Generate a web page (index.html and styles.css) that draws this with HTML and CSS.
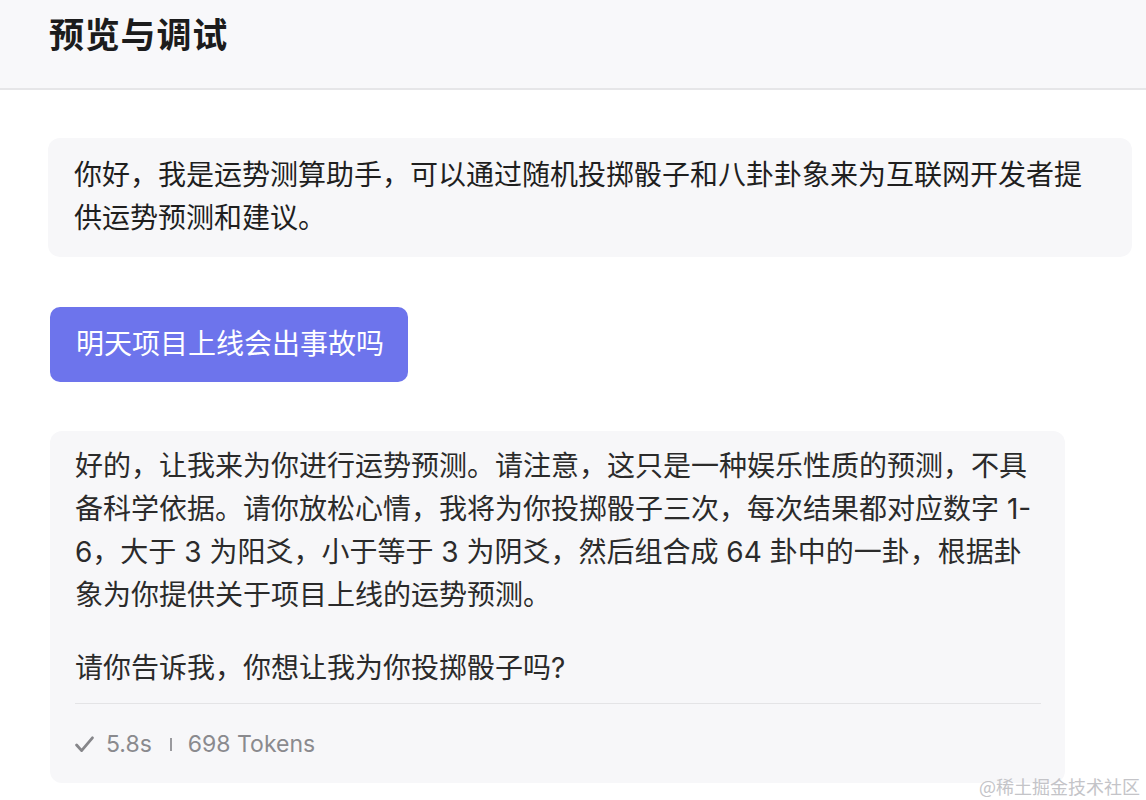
FILE: index.html
```html
<!DOCTYPE html>
<html lang="zh-CN">
<head>
<meta charset="utf-8">
<link rel="stylesheet" href="styles.css">
</head>
<body>
<header class="header">
  <h1 class="title">预览与调试</h1>
</header>
<main class="chat">
  <div class="bubble bot first">
    <p>你好，我是运势测算助手，可以通过随机投掷骰子和八卦卦象来为互联网开发者提供运势预测和建议。</p>
  </div>
  <div class="bubble user">明天项目上线会出事故吗</div>
  <div class="bubble bot answer">
    <p>好的，让我来为你进行运势预测。请注意，这只是一种娱乐性质的预测，不具备科学依据。请你放松心情，我将为你投掷骰子三次，每次结果都对应数字 1-6，大于 3 为阳爻，小于等于 3 为阴爻，然后组合成 64 卦中的一卦，根据卦象为你提供关于项目上线的运势预测。</p>
    <p>请你告诉我，你想让我为你投掷骰子吗?</p>
    <div class="meta">
      <svg class="check" width="19" height="17" viewBox="0 0 19 17"><path d="M1.6 9 L6.6 14.6 L17.4 1.8" fill="none" stroke="#86868a" stroke-width="2.8" stroke-linecap="round" stroke-linejoin="round"/></svg>
      <span class="time">5.8s</span>
      <span class="sep"></span>
      <span>698 Tokens</span>
    </div>
  </div>
</main>
<div class="watermark">@稀土掘金技术社区</div>
</body>
</html>
```
FILE: styles.css
```css
* { box-sizing: border-box; }
html, body { margin: 0; padding: 0; }
body {
  width: 1146px;
  height: 800px;
  overflow: hidden;
  background: #ffffff;
  font-family: "Inter", "Noto Sans CJK SC", sans-serif;
  color: #1f1f1f;
  position: relative;
}
.header {
  height: 90px;
  background: #f8f8fa;
  border-bottom: 2px solid #e6e6e8;
  padding: 0 0 0 49px;
  display: flex;
  align-items: flex-start;
}
.title {
  margin: 10px 0 0 0;
  font-family: "Noto Sans CJK SC", sans-serif;
  font-size: 35px;
  line-height: 46px;
  font-weight: 700;
  color: #1c1c1c;
  letter-spacing: 0.8px;
}
.chat {
  display: flex;
  flex-direction: column;
  align-items: flex-start;
  padding: 48px 0 0 48px;
}
.bubble {
  font-size: 28px;
  line-height: 43px;
  border-radius: 12px;
}
.bubble p { margin: 0; }
.bot {
  background: #f7f7f9;
}
.first {
  width: 1084px;
  padding: 16px 26px 17px 26px;
}
.user {
  margin: 50px 0 0 2px;
  background: #6d74ec;
  color: #ffffff;
  padding: 16px 24px 16px 26px;
  border-radius: 10px;
}
.answer {
  margin: 49px 0 0 2px;
  width: 1015px;
  padding: 14px 24px 24px 25px;
  color: #2b2b2b;
}
.answer p + p { margin-top: 30px; }
.meta {
  margin-top: 13px;
  border-top: 1px solid #e4e4e6;
  padding-top: 25px;
  display: flex;
  align-items: center;
  font-size: 23px;
  line-height: 30px;
  color: #8a8a8e;
  font-family: "Inter", "Noto Sans", sans-serif;
}
.check { margin-left: 0; margin-right: 12px; }
.sep {
  width: 2px;
  height: 13px;
  background: #9a9a9e;
  margin: 0 16px 0 18px;
}
.watermark {
  position: absolute;
  right: 6px;
  bottom: 2px;
  font-family: "Noto Sans CJK SC", sans-serif;
  font-size: 18px;
  line-height: 24px;
  color: #c4c4c8;
}
```
